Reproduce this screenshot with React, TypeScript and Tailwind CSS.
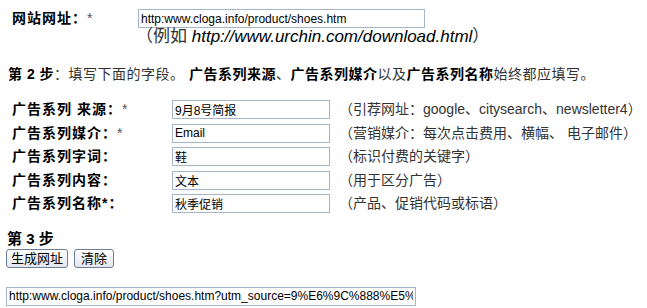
import * as React from "react";

const rows = [
  { label: "广告系列 来源：", star: "*", value: "9月8号简报", hint: "（引荐网址：google、citysearch、newsletter4）" },
  { label: "广告系列媒介：", star: "*", value: "Email", hint: "（营销媒介：每次点击费用、横幅、 电子邮件）" },
  { label: "广告系列字词：", star: "", value: "鞋", hint: "（标识付费的关键字）" },
  { label: "广告系列内容：", star: "", value: "文本", hint: "（用于区分广告）" },
  { label: "广告系列名称*：", star: "", value: "秋季促销", hint: "（产品、促销代码或标语）" },
];

const cjk = "font-['Liberation_Sans','Noto_Sans_CJK_SC',sans-serif]";

function Field({ value, className }: { value: string; className: string }) {
  return (
    <input
      readOnly
      value={value}
      className={`h-[19px] border border-[#a3b6ca] bg-white px-[2px] text-[12px] leading-none text-black outline-none ${cjk} ${className}`}
    />
  );
}

export default function App() {
  return (
    <div className={`h-[308px] w-[647px] overflow-hidden bg-white text-black ${cjk}`}>
      <div className="flex items-center pt-[9px]">
        <span className="w-[138px] pl-[12px] text-[14px] leading-[19px] font-bold tracking-[1px]">
          网站网址：<span className="font-normal text-[#555]">*</span>
        </span>
        <Field value="http:www.cloga.info/product/shoes.htm" className="w-[287px]" />
      </div>
      <div className="pl-[136px] text-[17px] leading-[18px] text-[#333]">
        （例如 <i className="text-black">http://www.urchin.com/download.html</i>）
      </div>

      <div className="mt-[19px] pl-[8px] text-[14px] leading-[18px] tracking-[0.5px] text-[#333]">
        <b className="text-black">第 2 步</b>：填写下面的字段。 <b className="text-black">广告系列来源</b>、
        <b className="text-black">广告系列媒介</b>以及<b className="text-black">广告系列名称</b>始终都应填写。
      </div>

      <div className="mt-[17px] flex flex-col gap-[4.5px]">
        {rows.map((r) => (
          <div key={r.label} className="flex h-[19px] items-center">
            <span className="w-[172px] pl-[12px] text-[14px] leading-[19px] font-bold tracking-[1px]">
              {r.label}
              {r.star && <span className="font-normal text-[#555]">{r.star}</span>}
            </span>
            <Field value={r.value} className="w-[158px]" />
            <span className="ml-[9px] text-[14px] leading-[19px] text-[#333]">{r.hint}</span>
          </div>
        ))}
      </div>

      <div className="mt-[17px] pl-[7px] text-[15px] font-bold leading-[18px]">第 3 步</div>
      <div className="flex gap-[6px] pl-[6px] pt-[1px]">
        <button className="h-[19px] w-[62px] rounded-[3px] border border-[#6b7f99] bg-gradient-to-b from-white to-[#e3e6ec] text-[13px] leading-none text-black">
          生成网址
        </button>
        <button className="h-[19px] w-[40px] rounded-[3px] border border-[#6b7f99] bg-gradient-to-b from-white to-[#e3e6ec] text-[13px] leading-none text-black">
          清除
        </button>
      </div>
      <div className="pl-[6px] pt-[15px]">
        <Field value="http:www.cloga.info/product/shoes.htm?utm_source=9%E6%9C%888%E5%8" className="w-[410px]" />
      </div>
    </div>
  );
}
